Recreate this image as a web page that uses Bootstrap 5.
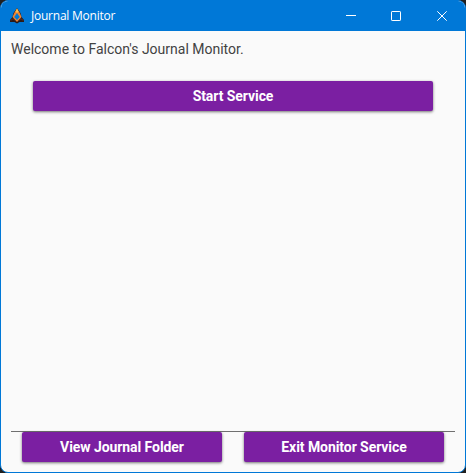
<!DOCTYPE html>
<html lang="en">
<head>
<meta charset="utf-8">
<meta name="viewport" content="width=device-width, initial-scale=1">
<title>Journal Monitor</title>
<link href="https://cdn.jsdelivr.net/npm/bootstrap@5.3.0/dist/css/bootstrap.min.css" rel="stylesheet">
<style>
body { background: #202020; font-family: Roboto, sans-serif; font-size: 14px; color: #424242; }
.app-window { border: 1px solid #0078d7; border-radius: 8px; background: #fafafa; }
.title-bar { height: 30px; background: #0078d7; color: #fff; font: 12px/30px "Open Sans", "Noto Sans", sans-serif; padding-left: 8px; }
.title-text { margin-left: 6px; letter-spacing: -.23px; }
.caption-btn { width: 46px; height: 30px; background: none; color: #fff; }
.caption-min { padding-left: 2px !important; }
.welcome { padding: 8px 10px 0; line-height: 20px; }
.start-area { padding: 22px 32px 0; }
.btn-purple { --bs-btn-color: #fff; --bs-btn-bg: #7b1fa2; --bs-btn-hover-color: #fff; --bs-btn-hover-bg: #8e24aa; --bs-btn-border-width: 0; --bs-btn-border-radius: 2px; --bs-btn-font-size: 14px; --bs-btn-line-height: 30px; height: 30px; font-weight: 700; letter-spacing: -.07px; box-shadow: 0 1px 3px rgba(0,0,0,.55); }
.action-bar { margin: 0 10px 10px; border-top: 1px solid #707070; padding: 0 11px; gap: 22px; }
</style>
<script src="https://cdn.jsdelivr.net/npm/bootstrap@5.3.0/dist/js/bootstrap.bundle.min.js"></script>
</head>
<body>
<main class="app-window vh-100 d-flex flex-column overflow-hidden">
  <header class="title-bar d-flex align-items-center flex-shrink-0">
    <svg width="16" height="16" viewBox="0 0 16 16" aria-hidden="true">
      <path d="M8 0 11.500 5l1 4L15 12v2h-4.500L8 15.500 5.500 14H1v-2l2.500-3 1-4z" fill="#2a1a19"/>
      <path d="M8 .5 10.500 4.500 12.500 9 8 14 3.500 9 5.500 4.500z" fill="#ee8434"/>
      <path d="M8 .5 9.500 3.500 8 5 6.500 3.500z" fill="#ffc04a"/>
      <path d="M8 5 10.800 9 8 12 5.200 9z" fill="#0078d7"/>
      <path d="M2 12.500 4 10.500l2.500 2M14 12.500l-2-2-2.500 2" fill="none" stroke="#7b3b20"/>
    </svg>
    <span class="title-text me-auto">Journal Monitor</span>
    <button class="caption-btn caption-min border-0 p-0 d-flex align-items-center justify-content-center" aria-label="Minimize"><svg width="10" height="10"><path d="M0 4.500h10" stroke="currentColor"/></svg></button>
    <button class="caption-btn border-0 p-0 d-flex align-items-center justify-content-center" aria-label="Maximize"><svg width="10" height="10"><rect x=".5" y=".5" width="9" height="9" rx=".6" fill="none" stroke="currentColor"/></svg></button>
    <button class="caption-btn border-0 p-0 d-flex align-items-center justify-content-center" aria-label="Close"><svg width="10" height="10"><path d="M.3.3 9.700 9.700M9.700.3.3 9.700" stroke="currentColor"/></svg></button>
  </header>
  <p class="welcome mb-0">Welcome to Falcon's Journal Monitor.</p>
  <div class="start-area"><button class="btn btn-purple w-100 p-0 d-block">Start Service</button></div>
  <footer class="action-bar d-flex mt-auto">
    <button class="btn btn-purple flex-fill w-50 p-0">View Journal Folder</button>
    <button class="btn btn-purple flex-fill w-50 p-0">Exit Monitor Service</button>
  </footer>
</main>
</body>
</html>
